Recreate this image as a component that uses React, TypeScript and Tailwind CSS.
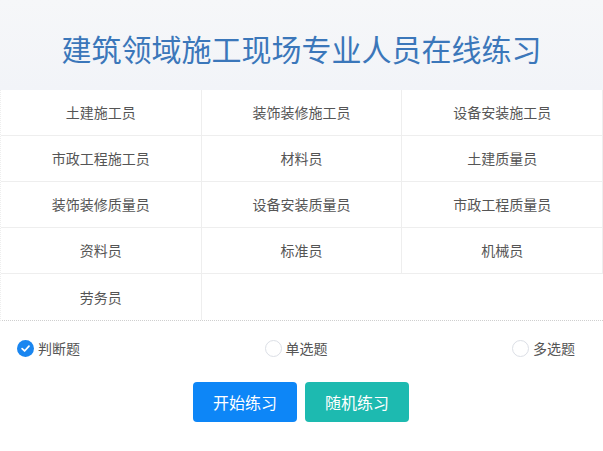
import { useState } from "react";

const JOBS = [
  "土建施工员",
  "装饰装修施工员",
  "设备安装施工员",
  "市政工程施工员",
  "材料员",
  "土建质量员",
  "装饰装修质量员",
  "设备安装质量员",
  "市政工程质量员",
  "资料员",
  "标准员",
  "机械员",
  "劳务员",
];

const TYPES = ["判断题", "单选题", "多选题"];

function Radio({ checked }: { checked: boolean }) {
  if (checked) {
    return (
      <span className="flex h-[17px] w-[17px] items-center justify-center rounded-full bg-[#1a86f0]">
        <svg viewBox="0 0 12 12" className="h-[11px] w-[11px]">
          <path d="M2.3 6.2 L5 8.7 L9.8 3.4" fill="none" stroke="#fff" strokeWidth="1.9" strokeLinecap="round" strokeLinejoin="round" />
        </svg>
      </span>
    );
  }
  return <span className="h-[17px] w-[17px] rounded-full border border-[#dcdfe6] bg-white" />;
}

export default function App() {
  const [type, setType] = useState("判断题");

  return (
    <div
      className="h-[451px] w-[603px] overflow-hidden bg-white"
      style={{ fontFamily: '"Microsoft YaHei", "Noto Sans CJK SC", sans-serif' }}
    >
      <header className="flex h-[90px] items-center justify-center bg-gradient-to-b from-[#f6f7f9] to-[#f2f4f8] pt-[6px]">
        <h1 className="text-[30px] font-normal text-[#3b77ba]">
          建筑领域施工现场专业人员在线练习
        </h1>
      </header>

      <div className="grid grid-cols-3 border-b border-dotted border-[#cfcfcf] border-l border-l-[#eeeeee]">
        {JOBS.map((job, i) => (
          <button
            key={job}
            type="button"
            className={`flex h-[46px] items-center justify-center border-r border-[#eeeeee] text-[14px] text-[#555] ${
              i < 12 ? "border-b" : ""
            }`}
          >
            {job}
          </button>
        ))}
      </div>

      <div className="flex items-center justify-between pl-[17px] pr-[28px] pt-[17px]">
        {TYPES.map((t) => (
          <label
            key={t}
            onClick={() => setType(t)}
            className="flex cursor-pointer items-center gap-[4px] text-[14px] text-[#555]"
          >
            <Radio checked={type === t} />
            {t}
          </label>
        ))}
      </div>

      <div className="mt-[23px] flex justify-center gap-[8px] pr-[1px]">
        <button
          type="button"
          className="h-[40px] w-[104px] rounded-[4px] bg-[#0d86f7] text-[16px] text-white"
        >
          开始练习
        </button>
        <button
          type="button"
          className="h-[40px] w-[104px] rounded-[4px] bg-[#1dbab0] text-[16px] text-white"
        >
          随机练习
        </button>
      </div>
    </div>
  );
}
